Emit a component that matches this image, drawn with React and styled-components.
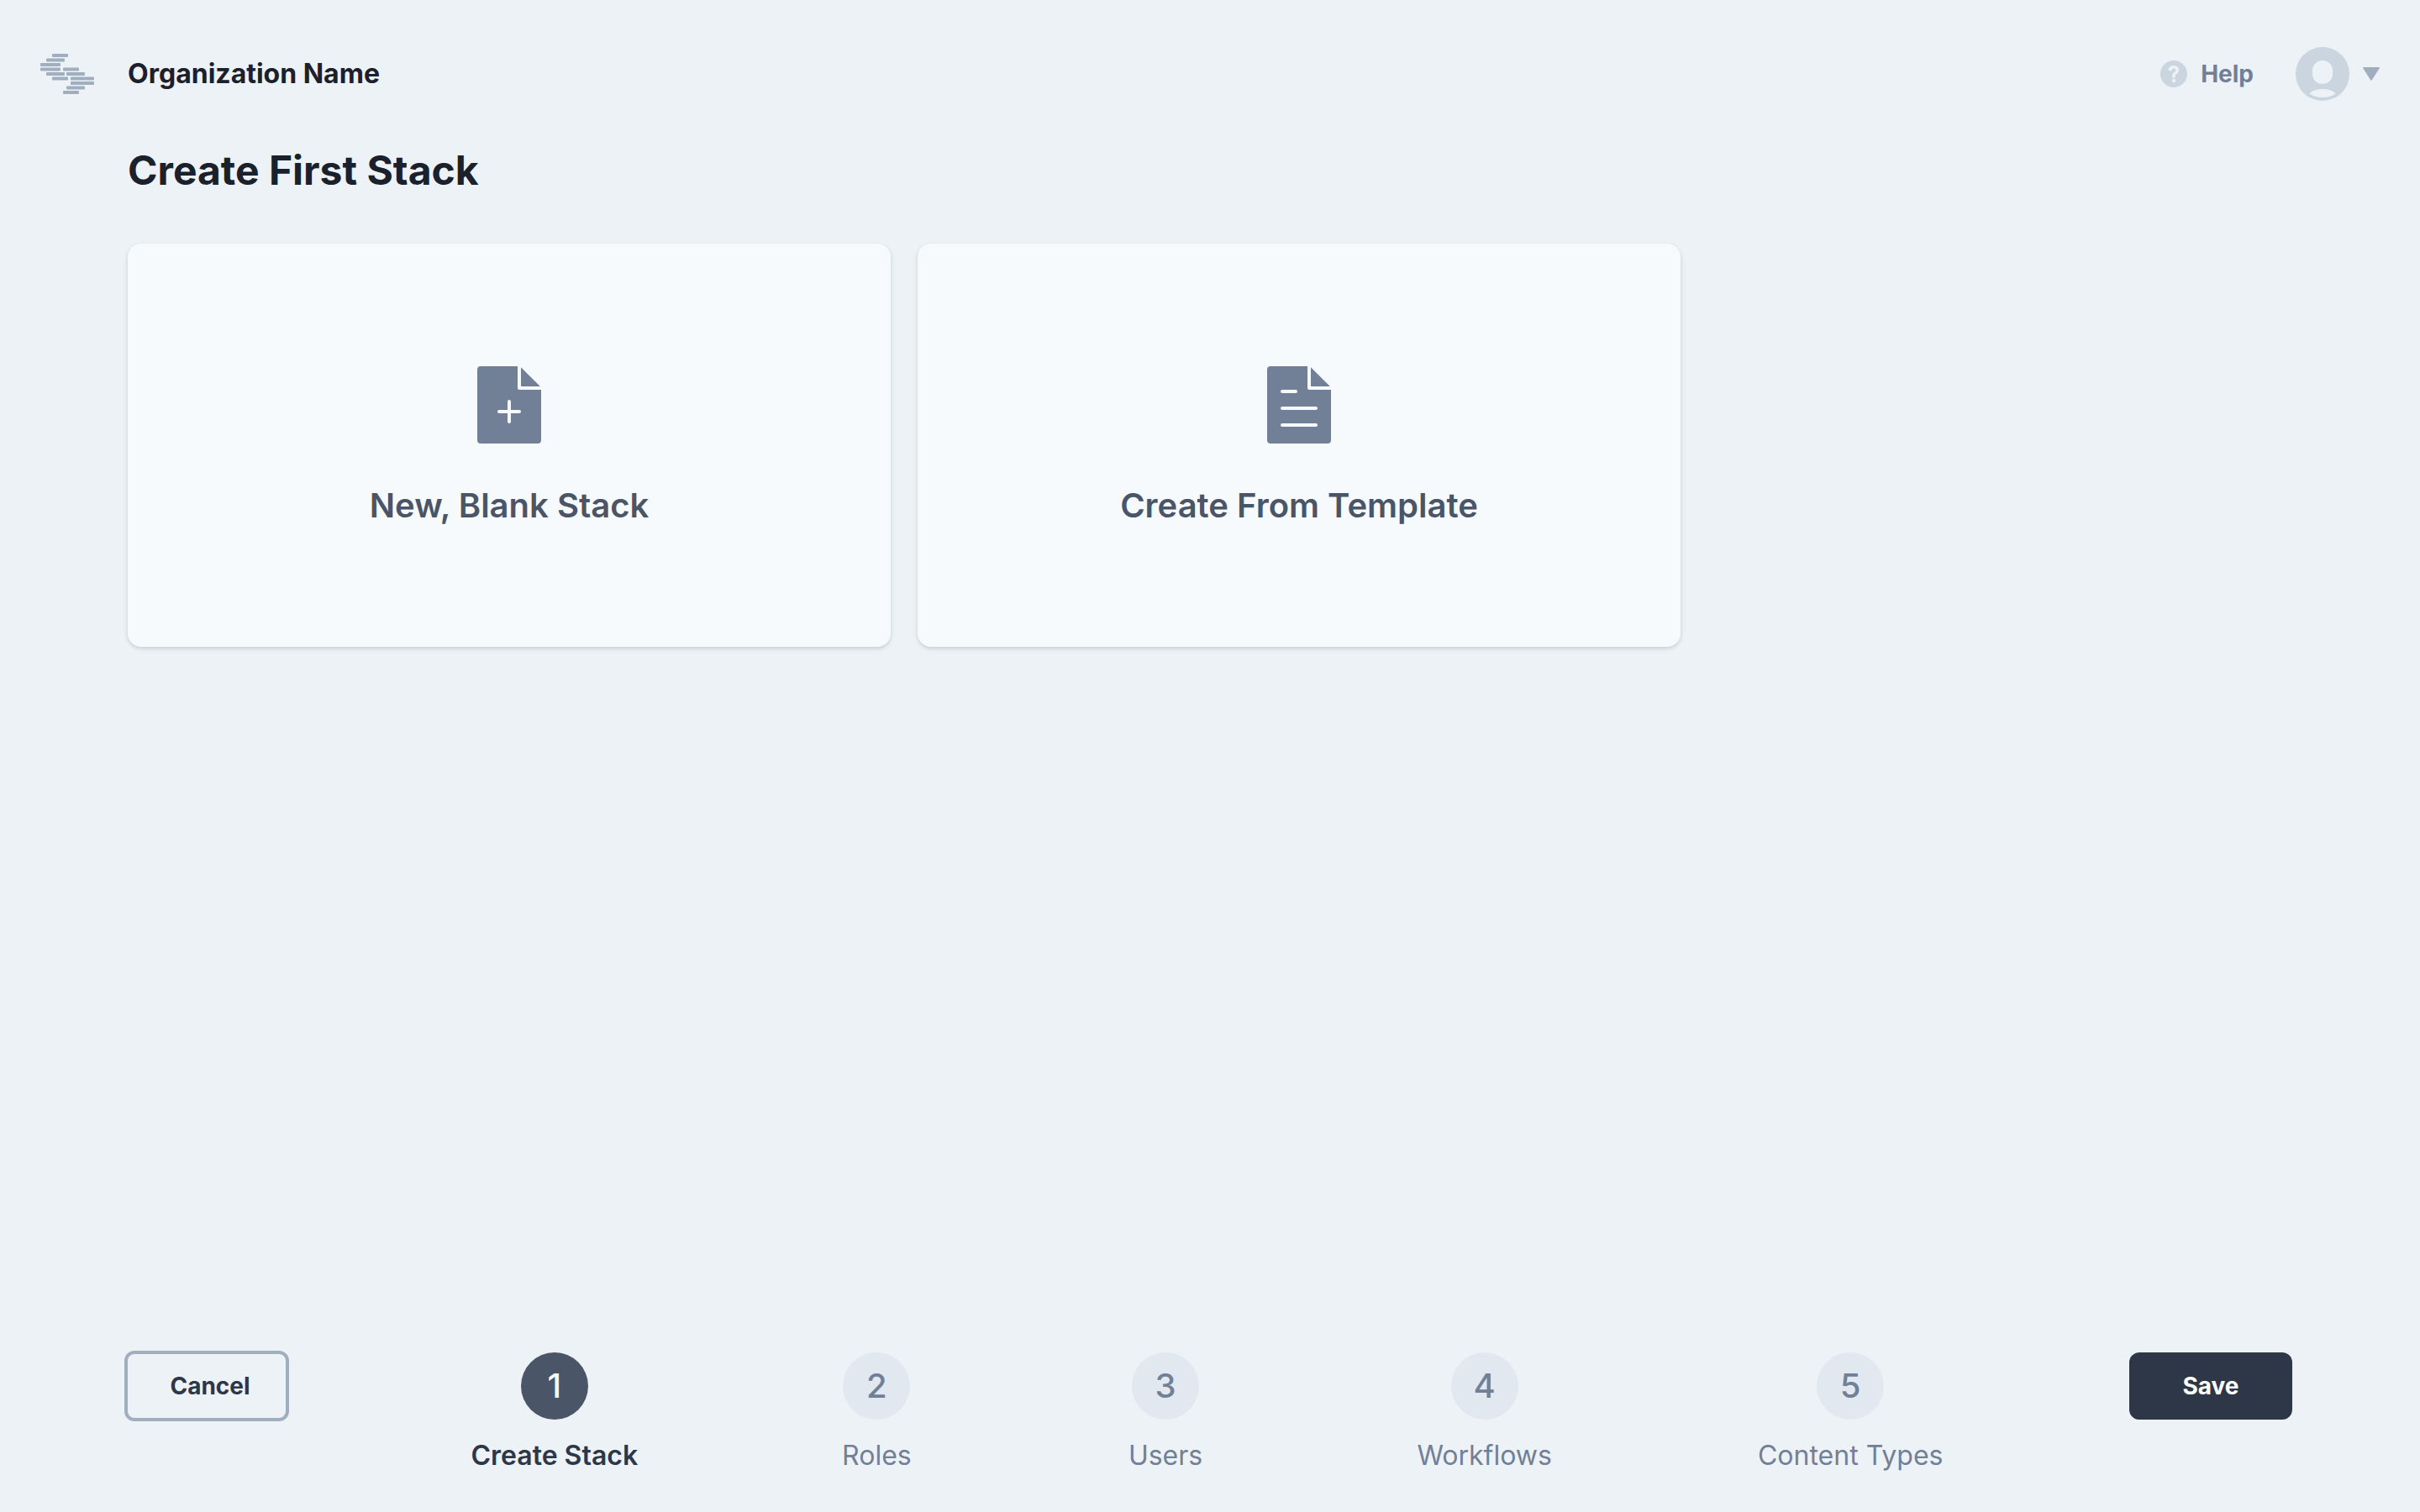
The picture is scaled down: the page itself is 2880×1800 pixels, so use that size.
import React from "react";
import styled, { createGlobalStyle, css } from "styled-components";

const color = {
  page: "#edf2f7",
  card: "#f7fafc",
  mist: "#e2e8f0",
  silver: "#cbd5e0",
  steel: "#a0aec0",
  slate: "#718096",
  dusk: "#4a5568",
  navy: "#2d3748",
  ink: "#1a202c",
};

const GlobalStyle = createGlobalStyle`
  *, *::before, *::after { box-sizing: border-box; }
  body {
    margin: 0;
    background: ${color.page};
    color: ${color.ink};
    font-family: Inter, "Liberation Sans", sans-serif;
  }
  button { font: inherit; color: inherit; cursor: pointer; }
  h1, h2, p, ol { margin: 0; padding: 0; }
`;

const Page = styled.div`
  display: flex;
  flex-direction: column;
  min-height: 100vh;
`;

const Header = styled.header`
  display: flex;
  align-items: center;
  justify-content: space-between;
  padding: 56px 48px 0;
`;

const Brand = styled.a`
  display: flex;
  align-items: center;
  gap: 40px;
  color: ${color.ink};
  font-size: 32px;
  font-weight: 700;
  line-height: 40px;
  text-decoration: none;
`;

const Account = styled.nav`
  display: flex;
  align-items: center;
  gap: 50px;
`;

const HelpLink = styled.a`
  display: flex;
  align-items: center;
  gap: 16px;
  color: ${color.slate};
  font-size: 28px;
  font-weight: 700;
  line-height: 40px;
  text-decoration: none;
`;

const UserMenu = styled.button`
  display: flex;
  align-items: center;
  gap: 16px;
  padding: 0;
  border: 0;
  background: none;
`;

const Main = styled.main`
  flex: 1;
  padding: 48px 152px;
`;

const Title = styled.h1`
  font-size: 48px;
  font-weight: 700;
  line-height: 70px;
`;

const Choices = styled.div`
  display: grid;
  grid-template-columns: repeat(2, 1fr);
  gap: 32px;
  max-width: 1848px;
  margin-top: 52px;
`;

const Choice = styled.button`
  display: flex;
  flex-direction: column;
  align-items: center;
  justify-content: center;
  gap: 52px;
  min-height: 480px;
  padding: 48px;
  border: 0;
  border-radius: 16px;
  background: ${color.card};
  box-shadow: 0 2px 6px rgba(0, 0, 0, 0.1), 0 2px 4px rgba(0, 0, 0, 0.06);
`;

const ChoiceName = styled.span`
  color: ${color.dusk};
  font-size: 40px;
  font-weight: 600;
  line-height: 44px;
`;

const Footer = styled.footer`
  display: flex;
  align-items: flex-start;
  justify-content: space-between;
  gap: 114px;
  padding: 0 152px 48px 148px;
`;

const Action = styled.button`
  flex: none;
  border-radius: 12px;
  font-size: 28px;
  font-weight: 700;
  line-height: 40px;
  ${({ $primary }) =>
    $primary
      ? css`
          width: 194px;
          margin-top: 2px;
          padding: 20px;
          border: 0;
          background: ${color.navy};
          color: #fff;
        `
      : css`
          width: 196px;
          padding: 18px 16px 18px 24px;
          border: 4px solid ${color.steel};
          background: none;
          color: ${color.navy};
        `}
`;

const Steps = styled.ol`
  display: grid;
  flex: 1;
  grid-template-columns: 404fr 364fr 324fr 436fr 436fr;
  padding-top: 2px;
  list-style: none;
`;

const Step = styled.li`
  display: flex;
  flex-direction: column;
  align-items: center;
  gap: 24px;
  color: ${({ $current }) => ($current ? color.navy : color.slate)};
  font-size: 32px;
  font-weight: ${({ $current }) => ($current ? 600 : 400)};
  line-height: 38px;
  white-space: nowrap;
`;

const StepNumber = styled.span`
  display: grid;
  place-items: center;
  width: 80px;
  height: 80px;
  border-radius: 50%;
  background: ${({ $current }) => ($current ? color.dusk : color.mist)};
  color: ${({ $current }) => ($current ? color.card : color.slate)};
  font-size: 40px;
  font-weight: 500;
`;

const logoBars = [
  [14, 0, 19],
  [7, 5.5, 22],
  [0, 11, 24],
  [0, 16.5, 24],
  [27, 16.5, 19],
  [7, 22, 22],
  [31, 22, 22],
  [14, 27.5, 19],
  [36, 27.5, 28],
  [36, 33, 28],
  [31, 38.5, 22],
  [27, 44, 19],
];

const Logo = () => (
  <svg width="64" height="48" viewBox="0 0 64 48" fill={color.steel} aria-hidden="true">
    {logoBars.map(([x, y, w]) => (
      <rect key={`${x}-${y}`} x={x} y={y} width={w} height="4" rx="1" />
    ))}
  </svg>
);

const HelpIcon = () => (
  <svg width="32" height="32" viewBox="0 0 32 32" fill="none" aria-hidden="true">
    <circle cx="16" cy="16" r="16" fill={color.silver} />
    <path
      d="M11.6 10.4C12.4 8.6 14 7.7 16 7.7C18.5 7.7 20.3 9.3 20.3 11.4C20.3 13.3 19.2 14.2 17.8 15.1C16.6 15.9 16 16.5 16 18V18.6"
      stroke={color.page}
      strokeWidth="3.6"
      strokeLinecap="square"
    />
    <circle cx="16" cy="24" r="2.2" fill={color.page} />
  </svg>
);

const Avatar = () => (
  <svg width="64" height="64" viewBox="0 0 64 64" fill={color.page} aria-hidden="true">
    <circle cx="32" cy="32" r="32" fill={color.silver} />
    <rect x="20" y="16" width="24" height="28" rx="12" />
    <path d="M16.5 55.5C20 51.5 26 50 32 50S44 51.5 47.5 55.5C43 58.7 38 60 32 60S21 58.7 16.5 55.5Z" />
  </svg>
);

const Caret = () => (
  <svg width="20" height="16" viewBox="0 0 20 16" fill={color.steel} aria-hidden="true">
    <path d="M1 0H19Q20.4 0.3 19.6 1.6L10.8 15.2Q10 16.4 9.2 15.2L0.4 1.6Q-0.4 0.3 1 0Z" />
  </svg>
);

const FileIcon = ({ children }) => (
  <svg width="76" height="92" viewBox="0 0 76 92" fill={color.slate} aria-hidden="true">
    <path d="M4 0H48V26Q48 28 50 28H76V88Q76 92 72 92H4Q0 92 0 88V4Q0 0 4 0Z" />
    <path d="M52 1.2L74.8 24H52Z" />
    <g stroke={color.card} strokeWidth="4" strokeLinecap="round">
      {children}
    </g>
  </svg>
);

const steps = ["Create Stack", "Roles", "Users", "Workflows", "Content Types"];

export default function App() {
  return (
    <Page>
      <GlobalStyle />
      <Header>
        <Brand href="#">
          <Logo />
          Organization Name
        </Brand>
        <Account>
          <HelpLink href="#help">
            <HelpIcon />
            Help
          </HelpLink>
          <UserMenu type="button" aria-label="Account menu">
            <Avatar />
            <Caret />
          </UserMenu>
        </Account>
      </Header>
      <Main>
        <Title>Create First Stack</Title>
        <Choices>
          <Choice type="button">
            <FileIcon>
              <path d="M38 42V66M26 54H50" />
            </FileIcon>
            <ChoiceName>New, Blank Stack</ChoiceName>
          </Choice>
          <Choice type="button">
            <FileIcon>
              <path d="M18 30H34M18 50H58M18 70H58" />
            </FileIcon>
            <ChoiceName>Create From Template</ChoiceName>
          </Choice>
        </Choices>
      </Main>
      <Footer>
        <Action type="button">Cancel</Action>
        <Steps>
          {steps.map((name, i) => (
            <Step key={name} $current={i === 0} aria-current={i === 0 ? "step" : undefined}>
              <StepNumber $current={i === 0}>{i + 1}</StepNumber>
              {name}
            </Step>
          ))}
        </Steps>
        <Action type="button" $primary>
          Save
        </Action>
      </Footer>
    </Page>
  );
}
